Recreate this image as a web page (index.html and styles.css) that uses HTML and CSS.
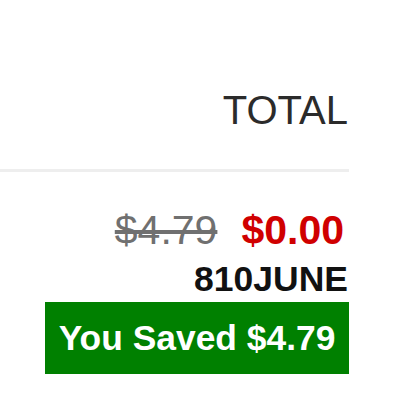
FILE: index.html
```html
<!DOCTYPE html>
<html>
<head>
<meta charset="utf-8">
<link rel="stylesheet" href="styles.css">
</head>
<body>
<div class="cart">
  <div class="head">TOTAL</div>
  <div class="cell">
    <div class="prices"><span class="old">$4.79</span><span class="new">$0.00</span></div>
    <div class="code">810JUNE</div>
    <div class="saved">You Saved $4.79</div>
  </div>
</div>
</body>
</html>
```
FILE: styles.css
```css
html, body { margin: 0; padding: 0; background: #fff; }
body { font-family: "Liberation Sans", Arial, sans-serif; }
.cart { width: 349px; display: flex; flex-direction: column; align-items: stretch; }
.head {
  text-align: right;
  font-size: 40px;
  line-height: 44px;
  color: #2b2b2b;
  padding-top: 88px;
  padding-bottom: 37px;
  padding-right: 1px;
  border-bottom: 3px solid #eee;
}
.cell { display: flex; flex-direction: column; align-items: flex-end; padding-top: 35px; }
.prices { display: flex; gap: 24px; font-size: 41px; line-height: 46px; padding-right: 5px; }
.old { color: #707070; text-decoration: line-through; }
.new { color: #d00000; font-weight: bold; }
.code { font-weight: bold; font-size: 35.5px; line-height: 36px; color: #111; margin-top: 8px; padding-right: 1px; }
.saved {
  margin-top: 5px;
  background: #008000;
  color: #fff;
  font-weight: bold;
  font-size: 35.4px;
  line-height: 72px;
  width: 304px;
  text-align: center;
}
```
